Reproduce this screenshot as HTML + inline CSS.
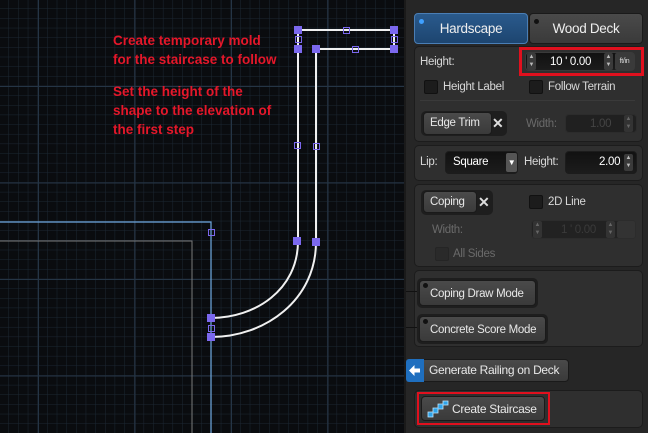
<!DOCTYPE html>
<html><head><meta charset="utf-8"><style>
*{box-sizing:border-box;margin:0;padding:0}
html,body{width:648px;height:433px;overflow:hidden}
body{background:#0a0c0f;position:relative;font-family:"Liberation Sans",sans-serif;font-size:12px;color:#d8d8d8}
.a{position:absolute;white-space:nowrap}
.panel{left:404px;top:0;width:244px;height:433px;background:#262626;border-left:2px solid #1a1a1a;letter-spacing:-0.3px}
.sec{position:absolute;background:#2f2f2f;border:1px solid #1c1c1c;border-radius:5px}
.btn{position:absolute;white-space:nowrap;overflow:hidden;background:linear-gradient(#4a4a4a,#3a3a3a);border:1px solid #1a1a1a;border-radius:4px;color:#e8e8e8;font-size:11.5px;line-height:20px;padding-left:6px}
.wrap{position:absolute;background:#1e1e1e;border-radius:5px}
.cb{position:absolute;width:14px;height:14px;background:#1c1c1c;border:1px solid #111;border-radius:2px}
.inp{position:absolute;background:linear-gradient(#111,#1c1c1c);border:1px solid #3a3a3a;border-radius:4px}
.sp{position:absolute;width:9px;height:18px;color:#bbb;font-size:6px;line-height:8px;text-align:center;background:#3a3a3a;border-radius:2px;letter-spacing:0}
.lbl{position:absolute;font-size:11.5px;white-space:nowrap}
.dim{color:#6a6a6a}
.red{color:#e5172a;font-weight:bold;font-size:13.5px;line-height:19px}
</style></head><body>
<svg class="a" style="left:0;top:0" width="404" height="433">
<defs>
<pattern id="mi" x="8.5" y="8.5" width="9.65" height="9.65" patternUnits="userSpaceOnUse"><path d="M0 0H9.65M0 0V9.65" stroke="#1c2733" stroke-width="1" fill="none"/></pattern>
<pattern id="ma" x="38" y="86" width="96.5" height="96.5" patternUnits="userSpaceOnUse"><path d="M0 0H96.5M0 0V96.5" stroke="#253545" stroke-width="2" fill="none"/></pattern>
</defs>
<rect width="404" height="433" fill="#0a0c0f"/>
<rect width="404" height="433" fill="url(#mi)"/>
<rect width="404" height="433" fill="url(#ma)"/>
<path d="M0 222H211V433" stroke="#6fa8e0" stroke-width="1.2" fill="none"/>
<path d="M0 241H192V433" stroke="#7a7a7a" stroke-width="1" fill="none"/>
<g stroke="#f0f0f0" stroke-width="2" fill="none">
<path d="M298 30H394V49H316V242C316 300 265 337 211 337"/>
<path d="M298 30V241C298 290 255 318 211 318"/>
</g>
<g fill="#7b68ee">
<rect x="294" y="26" width="8" height="8"/><rect x="390" y="26" width="8" height="8"/>
<rect x="294" y="45" width="8" height="8"/><rect x="312" y="45" width="8" height="8"/><rect x="390" y="45" width="8" height="8"/>
<rect x="293" y="237" width="8" height="8"/><rect x="312" y="238" width="8" height="8"/>
<rect x="207" y="314" width="8" height="8"/><rect x="207" y="333" width="8" height="8"/>
</g>
<g fill="none" stroke="#7b68ee" stroke-width="1">
<rect x="343.5" y="27.5" width="6" height="6"/><rect x="352.5" y="46.5" width="6" height="6"/>
<rect x="295.5" y="36.5" width="6" height="6"/><rect x="391.5" y="36.5" width="6" height="6"/>
<rect x="294.5" y="142.5" width="6" height="6"/><rect x="313.5" y="143.5" width="6" height="6"/>
<rect x="208.5" y="325.5" width="6" height="6"/><rect x="208.5" y="229.5" width="6" height="6"/>
</g>
</svg>
<div class="a red" style="left:113px;top:31px">Create temporary mold<br>for the staircase to follow</div>
<div class="a red" style="left:113px;top:82px">Set the height of the<br>shape to the elevation of<br>the first step</div>

<div class="a panel">
<div class="a" style="left:8px;top:13px;width:114px;height:31px;background:linear-gradient(#2a5a8c,#1d4570);border:1px solid #4a7eb5;border-radius:4px;color:#eee;font-size:13.5px;line-height:29px;text-align:center">Hardscape</div>
<div class="a" style="left:13px;top:19px;width:5px;height:5px;border-radius:50%;background:#3fa0ff"></div>
<div class="a" style="left:123px;top:13px;width:114px;height:31px;background:linear-gradient(#4a4a4a,#3a3a3a);border:1px solid #1a1a1a;border-radius:4px;color:#eee;font-size:13.5px;line-height:29px;text-align:center">Wood Deck</div>
<div class="a" style="left:128px;top:19px;width:5px;height:5px;border-radius:50%;background:#111"></div>

<div class="sec" style="left:8px;top:46px;width:229px;height:96px"></div>
<div class="lbl" style="left:14px;top:56px">Height:</div>
<div class="a" style="left:113px;top:47px;width:125px;height:29px;border:3px solid #e0101e"></div>
<div class="inp" style="left:119px;top:52px;width:110px;height:19px"></div>
<div class="sp" style="left:121px;top:53px;height:17px">▲<br>▼</div>
<div class="lbl" style="left:144px;top:56px;color:#fff">10 ' 0.00</div>
<div class="sp" style="left:198px;top:53px;height:17px">▲<br>▼</div>
<div class="a" style="left:209px;top:53px;width:19px;height:17px;background:#3a3a3a;border-radius:2px;font-size:7px;line-height:17px;text-align:center;color:#ddd">ft/in</div>
<div class="cb" style="left:18px;top:80px"></div><div class="lbl" style="left:37px;top:81px">Height Label</div>
<div class="cb" style="left:123px;top:80px"></div><div class="lbl" style="left:142px;top:81px">Follow Terrain</div>
<div class="a" style="left:14px;top:100px;width:215px;height:1px;background:#3a3a3a"></div>
<div class="wrap" style="left:15px;top:111px;width:86px;height:25px"></div>
<div class="btn" style="left:17px;top:112px;width:69px;height:23px">Edge Trim</div>
<div class="a" style="left:86px;top:112px;width:14px;height:22px;color:#ddd;font-weight:bold;font-size:14px;line-height:22px">✕</div>
<div class="lbl dim" style="left:120px;top:118px">Width:</div>
<div class="inp" style="left:159px;top:114px;width:72px;height:19px;border-color:#2c2c2c;background:#202020"></div>
<div class="lbl dim" style="left:184px;top:118px;color:#444">1.00</div>
<div class="sp" style="left:218px;top:115px;height:17px;background:#333;color:#666">▲<br>▼</div>

<div class="sec" style="left:8px;top:145px;width:229px;height:36px"></div>
<div class="lbl" style="left:14px;top:156px">Lip:</div>
<div class="inp" style="left:39px;top:151px;width:73px;height:23px;border-color:#1c1c1c"></div>
<div class="lbl" style="left:47px;top:156px;color:#fff">Square</div>
<div class="a" style="left:100px;top:153px;width:11px;height:19px;background:#555;border-radius:2px;color:#fff;font-size:8px;line-height:19px;text-align:center">▼</div>
<div class="lbl" style="left:118px;top:156px">Height:</div>
<div class="inp" style="left:159px;top:151px;width:72px;height:23px;border-color:#1c1c1c"></div>
<div class="lbl" style="left:193px;top:156px;color:#fff">2.00</div>
<div class="sp" style="left:218px;top:154px;height:17px">▲<br>▼</div>

<div class="sec" style="left:8px;top:184px;width:229px;height:83px"></div>
<div class="wrap" style="left:15px;top:190px;width:72px;height:25px"></div>
<div class="btn" style="left:17px;top:191px;width:54px;height:22px">Coping</div>
<div class="a" style="left:72px;top:191px;width:14px;height:22px;color:#ddd;font-weight:bold;font-size:14px;line-height:22px">✕</div>
<div class="cb" style="left:123px;top:195px"></div><div class="lbl" style="left:142px;top:196px">2D Line</div>
<div class="lbl dim" style="left:26px;top:224px">Width:</div>
<div class="inp" style="left:125px;top:220px;width:105px;height:19px;border-color:#2c2c2c;background:#222"></div>
<div class="sp" style="left:127px;top:221px;height:17px;background:#333;color:#666">▲<br>▼</div>
<div class="lbl" style="left:155px;top:224px;color:#3a3a3a">1 ' 0.00</div>
<div class="sp" style="left:200px;top:221px;height:17px;background:#333;color:#666">▲<br>▼</div>
<div class="a" style="left:211px;top:221px;width:18px;height:17px;background:#333;border-radius:2px"></div>
<div class="cb" style="left:29px;top:247px;border-color:#252525;background:#2a2a2a"></div><div class="lbl dim" style="left:47px;top:248px">All Sides</div>

<div class="sec" style="left:8px;top:270px;width:229px;height:77px"></div>
<div class="a" style="left:0;top:291px;width:12px;height:1px;background:#111"></div>
<div class="a" style="left:0;top:327px;width:12px;height:1px;background:#111"></div>
<div class="wrap" style="left:11px;top:278px;width:121px;height:30px"></div>
<div class="btn" style="left:13px;top:280px;width:117px;height:26px;line-height:26px;padding-left:10px">Coping Draw Mode</div>
<div class="a" style="left:17px;top:283px;width:5px;height:5px;border-radius:50%;background:#111"></div>
<div class="wrap" style="left:11px;top:314px;width:131px;height:30px"></div>
<div class="btn" style="left:13px;top:316px;width:127px;height:26px;line-height:26px;padding-left:10px">Concrete Score Mode</div>
<div class="a" style="left:17px;top:319px;width:5px;height:5px;border-radius:50%;background:#111"></div>

<div class="btn" style="left:0;top:359px;width:163px;height:23px;line-height:21px;padding-left:22px;font-size:12px">Generate Railing on Deck</div>
<div class="a" style="left:0;top:359px;width:18px;height:23px;background:#1f6fbf;border-radius:3px 0 0 3px"></div>
<svg class="a" style="left:3px;top:365px" width="12" height="11"><path d="M0 5.5L5.5 0V3.5H11V7.5H5.5V11Z" fill="#fff"/></svg>

<div class="sec" style="left:8px;top:390px;width:229px;height:38px"></div>
<div class="a" style="left:11px;top:392px;width:133px;height:33px;border:2px solid #e0101e"></div>
<div class="btn" style="left:15px;top:396px;width:124px;height:25px;line-height:25px;padding-left:30px;font-size:12px">Create Staircase</div>
<svg class="a" style="left:21px;top:400px" width="22" height="18"><path d="M1 17H6V13H11V9H16V5H21V1H16V4H11V8H6V12H1Z" fill="#2fa3e8" stroke="#bfe6ff" stroke-width="0.8"/></svg>
</div>
</body></html>
